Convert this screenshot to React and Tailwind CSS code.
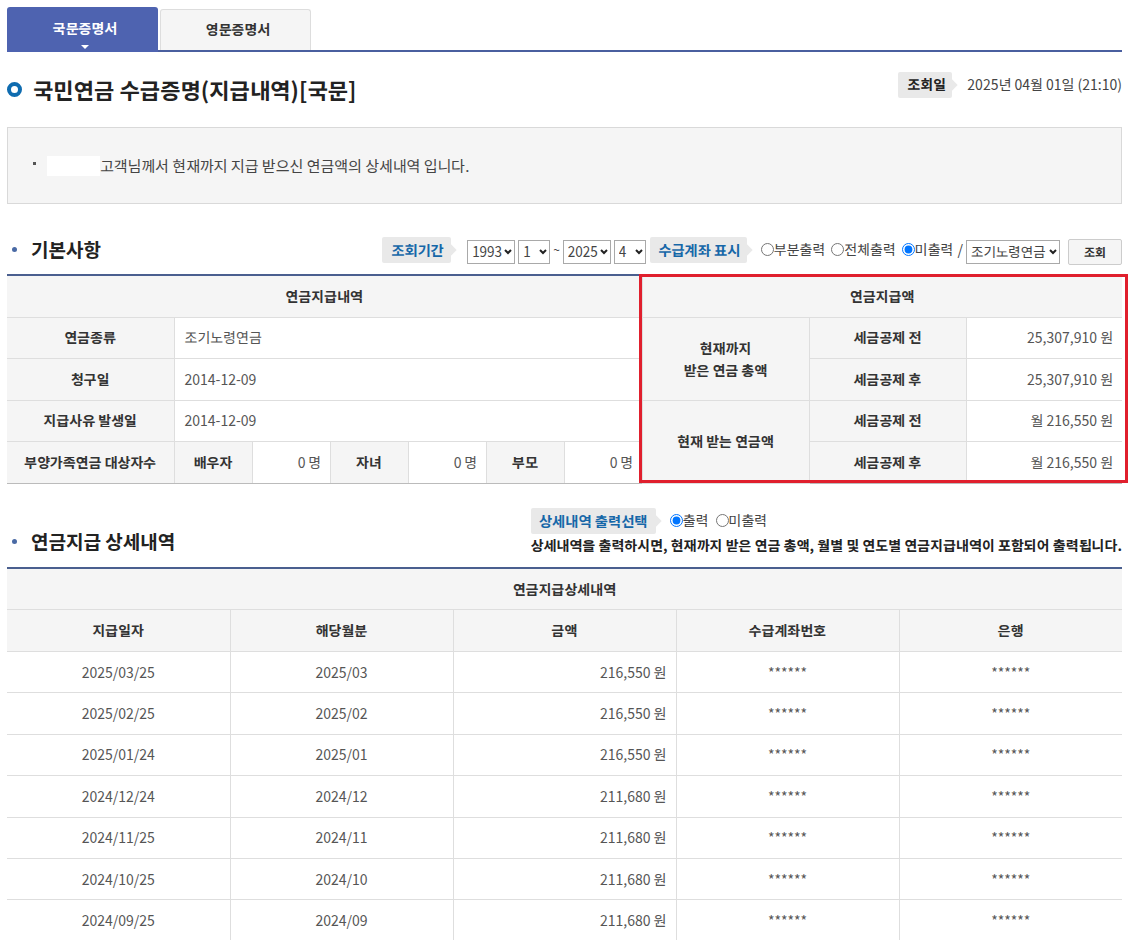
const FONT = "font-['Noto_Sans_KR','Noto_Sans_CJK_KR',sans-serif]";

const payments = [
    ["2025/03/25", "2025/03", "216,550 원"],
    ["2025/02/25", "2025/02", "216,550 원"],
    ["2025/01/24", "2025/01", "216,550 원"],
    ["2024/12/24", "2024/12", "211,680 원"],
    ["2024/11/25", "2024/11", "211,680 원"],
    ["2024/10/25", "2024/10", "211,680 원"],
    ["2024/09/25", "2024/09", "211,680 원"],
];

// 화살표 달린 회색 라벨
function Tag({ children, className = "" }) {
    return (
        <span className={`relative inline-flex items-center justify-center h-[26px] bg-[#e9e9e9] rounded-[2px] font-bold ${className}`}>
            {children}
            <span className="absolute right-[-4px] top-[9px] w-[8px] h-[8px] bg-[#e9e9e9] rotate-45"></span>
        </span>
    );
}

function Select({ options, className }) {
    return (
        <span className={`relative inline-block h-[24px] mt-[4px] ${className}`}>
            <select className="w-full h-full border border-[#a9a9a9] bg-white text-[13.5px] text-[#444] pl-[4px] appearance-none">
                {options.map((o) => <option key={o}>{o}</option>)}
            </select>
            <svg viewBox="0 0 8 6" className="absolute right-[3px] top-[9px] w-[8px] h-[6px] pointer-events-none" fill="none" stroke="#222" strokeWidth="2">
                <path d="M1 1l3 3 3-3" />
            </svg>
        </span>
    );
}

function Th({ children, className = "", ...rest }) {
    return <td {...rest} className={`bg-[#f5f5f5] border-b border-l border-[#dedede] first:border-l-0 text-center font-bold text-[14px] text-[#333] ${className}`}>{children}</td>;
}

function Td({ children, className = "", ...rest }) {
    return <td {...rest} className={`bg-white border-b border-l border-[#dedede] text-[14px] text-[#555] ${className}`}>{children}</td>;
}

export default function App() {
    return (
        <div className={`${FONT} w-[1130px] h-[940px] overflow-hidden bg-white pl-[7px] pr-[8px] pt-[7px] text-[#333]`}>
            {/* 탭 */}
            <div className="flex items-end gap-[2px] h-[45px] border-b-2 border-[#4a5f9f]">
                <div className="relative w-[151px] h-[45px] mb-[-2px] rounded-t-[3px] bg-[#4e63b0] text-white font-bold text-[14px] flex items-center justify-center pb-[2px] pl-[5px]">
                    국문증명서
                    <span className="absolute bottom-[3px] left-[74px] border-x-[4px] border-x-transparent border-t-[4px] border-t-white"></span>
                </div>
                <div className="w-[151px] h-[41px] rounded-t-[3px] border border-b-0 border-[#dddddd] bg-[#f5f5f5] font-bold text-[14px] flex items-center justify-center pb-[2px] pl-[5px]">
                    영문증명서
                </div>
            </div>

            {/* 제목 */}
            <div className="flex items-center justify-between mt-[18px] h-[38px]">
                <div className="flex items-center">
                    <span className="w-[15px] h-[15px] rounded-full border-[4px] border-[#0f6cb0] mr-[11px]"></span>
                    <h1 className="text-[22px] font-bold text-[#222] tracking-[0.1px]">국민연금 수급증명(지급내역)[국문]</h1>
                </div>
                <div className="flex items-center mt-[-9px]">
                    <Tag className="w-[54px] text-[14px] text-[#222] mr-[15px] pl-[3px]">조회일</Tag>
                    <span className="text-[14px] text-[#444]">2025년 04월 01일 (21:10)</span>
                </div>
            </div>

            {/* 안내 */}
            <div className="mt-[19px] h-[77px] border border-[#d9d9d9] bg-[#f5f5f5] flex items-center pl-[25px]">
                <span className="w-[3px] h-[3px] bg-[#555] mr-[11px] mb-[4px]"></span>
                <span className="w-[53px] h-[20px] bg-white"></span>
                <span className="text-[15px] text-[#444] mt-[1px]">고객님께서 현재까지 지급 받으신 연금액의 상세내역 입니다.</span>
            </div>

            {/* 기본사항 */}
            <div className="flex items-center justify-between mt-[26px] h-[45px] pb-[6px]">
                <div className="flex items-center pl-[5px]">
                    <span className="w-[5px] h-[5px] rounded-full bg-[#4a6aa5] mr-[14px]"></span>
                    <h2 className="text-[19px] font-bold text-[#222]">기본사항</h2>
                </div>
                <div className="flex items-center text-[14px] text-[#444]">
                    <Tag className="w-[69px] text-[14.3px] text-[#1667a8] mr-[16px] pl-[2px]">조회기간</Tag>
                    <Select options={["1993"]} className="w-[48px]" />
                    <Select options={["1"]} className="w-[32px] ml-[3px]" />
                    <span className="mx-[3px] text-[12px]">~</span>
                    <Select options={["2025"]} className="w-[48px]" />
                    <Select options={["4"]} className="w-[32px] ml-[3px]" />
                    <Tag className="w-[97px] ml-[4px] text-[14.3px] text-[#1667a8] mr-[14px] pl-[2px]">수급계좌 표시</Tag>
                    <label className="flex items-center"><input type="radio" name="acct" className="w-[13px] h-[13px] m-0" />부분출력</label>
                    <label className="flex items-center ml-[6px]"><input type="radio" name="acct" className="w-[13px] h-[13px] m-0" />전체출력</label>
                    <label className="flex items-center ml-[6px]"><input type="radio" name="acct" defaultChecked className="w-[13px] h-[13px] m-0" />미출력</label>
                    <span className="ml-[4px] mr-[3px]">/</span>
                    <Select options={["조기노령연금"]} className="w-[94px]" />
                    <button className="w-[54px] h-[26px] ml-[8px] mt-[4px] border border-[#cccccc] rounded-[2px] bg-[#f5f5f5] font-bold text-[12px] text-[#333]">조회</button>
                </div>
            </div>

            <div className="relative mt-[-3px]">
                <table className="w-[1115px] table-fixed border-collapse border-t-2 border-[#4a5f8f] mt-[2px]">
                    <colgroup>
                        <col className="w-[167px]" />
                        <col className="w-[78px]" />
                        <col className="w-[78px]" />
                        <col className="w-[78px]" />
                        <col className="w-[78px]" />
                        <col className="w-[78px]" />
                        <col className="w-[78px]" />
                        <col className="w-[167px]" />
                        <col className="w-[157px]" />
                        <col className="w-[156px]" />
                    </colgroup>
                    <tbody>
                        <tr className="h-[42px]">
                            <Th colSpan={7} className="pt-[1px]">연금지급내역</Th>
                            <Th colSpan={3} className="pt-[1px]">연금지급액</Th>
                        </tr>
                        <tr className="h-[41px]">
                            <Th>연금종류</Th>
                            <Td colSpan={6} className="pl-[10px]">조기노령연금</Td>
                            <Th rowSpan={2} className="leading-[22px]">현재까지<br />받은 연금 총액</Th>
                            <Th>세금공제 전</Th>
                            <Td className="text-right pr-[9px]">25,307,910 원</Td>
                        </tr>
                        <tr className="h-[42px]">
                            <Th>청구일</Th>
                            <Td colSpan={6} className="pl-[10px]">2014-12-09</Td>
                            <Th>세금공제 후</Th>
                            <Td className="text-right pr-[9px]">25,307,910 원</Td>
                        </tr>
                        <tr className="h-[41px]">
                            <Th>지급사유 발생일</Th>
                            <Td colSpan={6} className="pl-[10px]">2014-12-09</Td>
                            <Th rowSpan={2}>현재 받는 연금액</Th>
                            <Th>세금공제 전</Th>
                            <Td className="text-right pr-[9px]">월 216,550 원</Td>
                        </tr>
                        <tr className="h-[42px] [&>td]:border-b-[#bbbbbb]">
                            <Th>부양가족연금 대상자수</Th>
                            <Th>배우자</Th>
                            <Td className="text-right pr-[8px]">0 명</Td>
                            <Th>자녀</Th>
                            <Td className="text-right pr-[8px]">0 명</Td>
                            <Th>부모</Th>
                            <Td className="text-right pr-[8px]">0 명</Td>
                            <Th>세금공제 후</Th>
                            <Td className="text-right pr-[9px]">월 216,550 원</Td>
                        </tr>
                    </tbody>
                </table>
                {/* 빨간 강조 박스 */}
                <div className="absolute left-[632px] top-[0px] w-[489px] h-[209px] border-[3px] border-[#e01f2d] pointer-events-none"></div>
            </div>

            {/* 상세내역 */}
            <div className="flex items-end justify-between mt-[22px] h-[61px] pb-[11px]">
                <div className="flex items-center pl-[5px]">
                    <span className="w-[5px] h-[5px] rounded-full bg-[#4a6aa5] mr-[14px]"></span>
                    <h2 className="text-[19px] font-bold text-[#222]">연금지급 상세내역</h2>
                </div>
                <div className="flex flex-col">
                    <div className="flex items-center text-[14px] text-[#444]">
                        <Tag className="w-[125px] text-[14.3px] text-[#1667a8] mr-[14px]">상세내역 출력선택</Tag>
                        <label className="flex items-center"><input type="radio" name="detail" defaultChecked className="w-[13px] h-[13px] m-0" />출력</label>
                        <label className="flex items-center ml-[7px]"><input type="radio" name="detail" className="w-[13px] h-[13px] m-0" />미출력</label>
                    </div>
                    <p className="mt-[1px] text-[14px] tracking-[0.03px] font-bold text-[#222] whitespace-nowrap">상세내역을 출력하시면, 현재까지 받은 연금 총액, 월별 및 연도별 연금지급내역이 포함되어 출력됩니다.</p>
                </div>
            </div>

            <table className="w-[1115px] table-fixed border-collapse border-t-2 border-[#4a5f8f]">
                <tbody>
                    <tr className="h-[42px]"><Th colSpan={5} className="pt-[1px]">연금지급상세내역</Th></tr>
                    <tr className="h-[42px]">
                        <Th>지급일자</Th>
                        <Th>해당월분</Th>
                        <Th>금액</Th>
                        <Th>수급계좌번호</Th>
                        <Th>은행</Th>
                    </tr>
                    {payments.map((p) => (
                        <tr key={p[0]} className="h-[41.4px]">
                            <Td className="text-center border-l-0">{p[0]}</Td>
                            <Td className="text-center">{p[1]}</Td>
                            <Td className="text-right pr-[9px]">{p[2]}</Td>
                            <Td className="text-center">******</Td>
                            <Td className="text-center">******</Td>
                        </tr>
                    ))}
                </tbody>
            </table>
        </div>
    );
}
